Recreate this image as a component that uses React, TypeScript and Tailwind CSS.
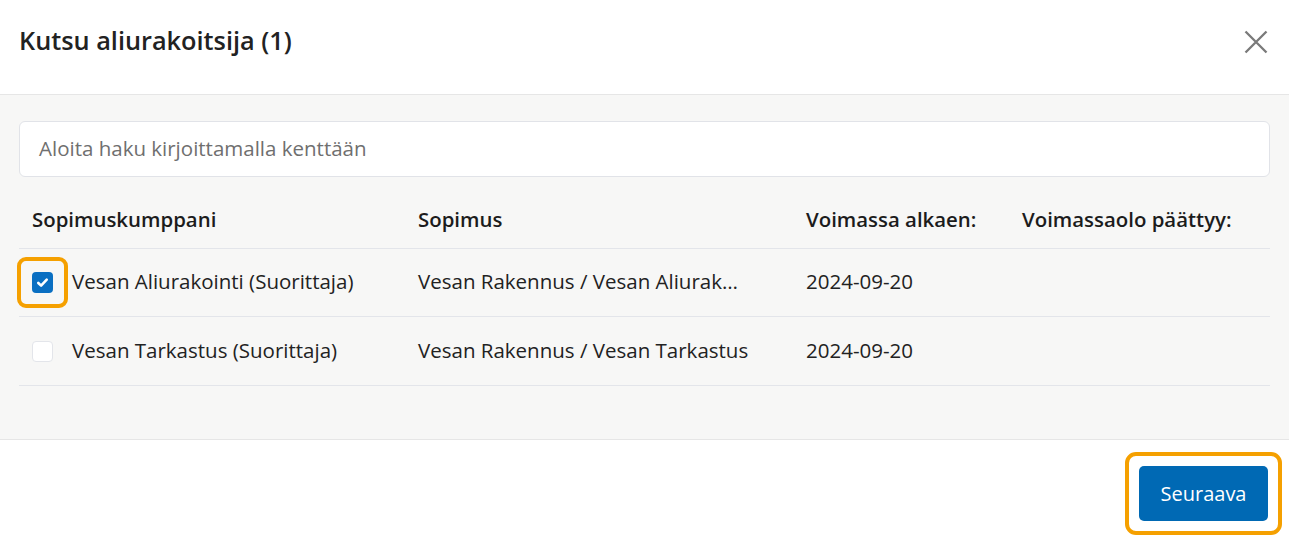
import React from "react";

function Check() {
  return (
    <svg viewBox="0 0 16 16" className="w-[15px] h-[15px]" fill="none">
      <path d="M3.5 8.5l3 2.8 6-6.3" stroke="white" strokeWidth="2.8" strokeLinecap="round" strokeLinejoin="round" />
    </svg>
  );
}

export default function App() {
  const font = { fontFamily: "'Open Sans', 'Noto Sans', sans-serif" };
  return (
    <div className="w-[1289px] h-[541px] flex flex-col bg-white text-[#222]" style={font}>
      <div className="h-[95px] shrink-0 flex items-center justify-between pl-[19px] pr-[18px] border-b border-[#e6e6e6]">
        <h1 className="text-[25.3px] font-semibold text-[#222] -mt-[12px]">Kutsu aliurakoitsija (1)</h1>
        <button className="w-[30px] h-[30px] flex items-center justify-center -mt-[10px]">
          <svg viewBox="0 0 24 24" className="w-[28px] h-[28px]" fill="none">
            <path d="M3 3L21 21M21 3L3 21" stroke="#7a7a7a" strokeWidth="2" />
          </svg>
        </button>
      </div>
      <div className="h-[345px] shrink-0 bg-[#f7f7f6] border-b border-[#e6e6e6] px-[19px] pt-[26px]">
        <div className="h-[56px] bg-white border border-[#e1e3e8] rounded-[6px] flex items-center px-[19px]">
          <span className="text-[20.5px] text-[#6f6f6f] -mt-[2px]">Aloita haku kirjoittamalla kenttään</span>
        </div>
        <div className="mt-[16px]">
          <div className="h-[56px] grid grid-cols-[386px_388px_216px_260px] items-center border-b border-[#e3e5ea] text-[20.4px] font-semibold text-[#1c1c1c]">
            <div className="pl-[13px] -mt-[2px]">Sopimuskumppani</div>
            <div className="pl-[13px] -mt-[2px]">Sopimus</div>
            <div className="pl-[13px] -mt-[2px]">Voimassa alkaen:</div>
            <div className="pl-[13px] -mt-[2px]">Voimassaolo päättyy:</div>
          </div>
          <div className="h-[68px] grid grid-cols-[386px_388px_216px_260px] items-center border-b border-[#e3e5ea] text-[20.5px] text-[#222]">
            <div className="pl-[13px] flex items-center">
              <div className="relative w-[21px] h-[21px]">
                <div className="absolute -left-[15px] -top-[15px] w-[51px] h-[51px] rounded-[9px] border-[4px] border-[#f5a000]" />
                <div className="w-[21px] h-[21px] rounded-[4px] bg-[#0a6fc2] flex items-center justify-center">
                  <Check />
                </div>
              </div>
              <span className="ml-[19px] -mt-[2px]">Vesan Aliurakointi (Suorittaja)</span>
            </div>
            <div className="pl-[13px] whitespace-nowrap -mt-[2px]">Vesan Rakennus / Vesan Aliurak…</div>
            <div className="pl-[13px] -mt-[2px]">2024-09-20</div>
            <div />
          </div>
          <div className="h-[69px] grid grid-cols-[386px_388px_216px_260px] items-center border-b border-[#e3e5ea] text-[20.5px] text-[#222]">
            <div className="pl-[13px] flex items-center">
              <div className="w-[21px] h-[21px] rounded-[4px] bg-white border border-[#e3e5ea]" />
              <span className="ml-[19px] -mt-[2px]">Vesan Tarkastus (Suorittaja)</span>
            </div>
            <div className="pl-[13px] whitespace-nowrap -mt-[2px]">Vesan Rakennus / Vesan Tarkastus</div>
            <div className="pl-[13px] -mt-[2px]">2024-09-20</div>
            <div />
          </div>
        </div>
      </div>
      <div className="flex-1 flex justify-end items-start pt-[12px] pr-[7px]">
        <div className="p-[10px] border-[4px] border-[#f5a000] rounded-[11px]">
          <button className="h-[55px] w-[129px] rounded-[5px] bg-[#0069b4] text-white text-[20px] font-medium">
            Seuraava
          </button>
        </div>
      </div>
    </div>
  );
}
